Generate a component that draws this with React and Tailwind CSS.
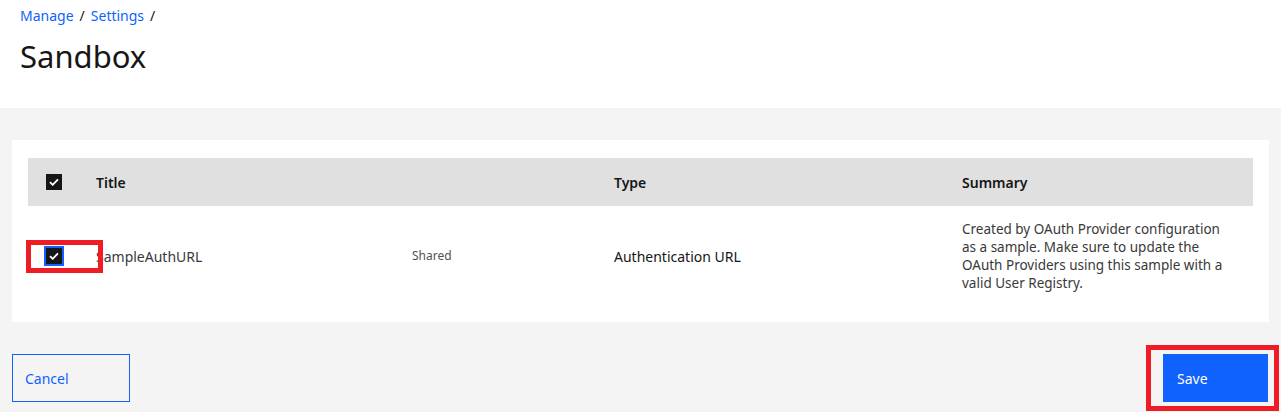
import React from "react";

function Check({ focus }) {
  const box = (
    <span className="flex h-4 w-4 items-center justify-center bg-[#161616]">
      <svg width="10" height="8" viewBox="0 0 10 8" fill="none">
        <path d="M1 4.2 L3.7 6.8 L9 1.3" stroke="#ffffff" strokeWidth="1.8" />
      </svg>
    </span>
  );
  if (focus) {
    return <span className="flex h-5 w-5 items-center justify-center border-2 border-[#0f62fe]">{box}</span>;
  }
  return box;
}

export default function App() {
  return (
    <div className="min-h-[412px] bg-[#f4f4f4] text-[#161616]" style={{ fontFamily: '"Noto Sans", "Open Sans", sans-serif' }}>
      <div className="h-[108px] bg-white px-5 pt-[6px]">
        <div className="flex items-center gap-[6px] text-[14px] leading-[20px]">
          <span className="text-[#0f62fe]">Manage</span>
          <span>/</span>
          <span className="text-[#0f62fe]">Settings</span>
          <span>/</span>
        </div>
        <h1 className="mt-[11px] text-[31px] leading-[38px] font-normal">Sandbox</h1>
      </div>
      <div className="px-3 pt-8">
        <div className="bg-white px-4 pt-[18px] pb-4">
          <div className="grid h-12 grid-cols-[52px_316px_202px_348px_1fr] items-center bg-[#e0e0e0] text-[14px] font-semibold">
            <div className="pl-[18px]"><Check /></div>
            <div className="pl-4">Title</div>
            <div></div>
            <div className="pl-4">Type</div>
            <div className="pl-4">Summary</div>
          </div>
          <div className="grid grid-cols-[52px_316px_202px_348px_1fr] items-center py-[14px] text-[14px] text-[#393939]">
            <div className="relative pl-4">
              <Check focus />
              <div className="absolute left-[-2px] top-[-6px] h-[33px] w-[77px] border-[5px] border-[#ee1c25]"></div>
            </div>
            <div className="pl-4">SampleAuthURL</div>
            <div className="pl-4 text-[12px] text-[#525252]">Shared</div>
            <div className="pl-4 text-[#161616]">Authentication URL</div>
            <div className="pl-4 pr-4 leading-[18px] text-[13.5px]">
              Created by OAuth Provider configuration as a sample. Make sure to update the OAuth Providers using this sample with a valid User Registry.
            </div>
          </div>
        </div>
        <div className="mt-8 flex items-start justify-between">
          <button className="h-12 w-[118px] border border-[#0f62fe] pl-[12px] text-left text-[14px] text-[#0f62fe]">Cancel</button>
          <div className="relative -mt-[9px] mr-[-10px] border-[5px] border-[#ee1c25] pt-1 pb-1 pl-3 pr-[6px]">
            <button className="h-12 w-[105px] bg-[#0f62fe] pl-[14px] text-left text-[14px] text-white">Save</button>
          </div>
        </div>
      </div>
    </div>
  );
}
